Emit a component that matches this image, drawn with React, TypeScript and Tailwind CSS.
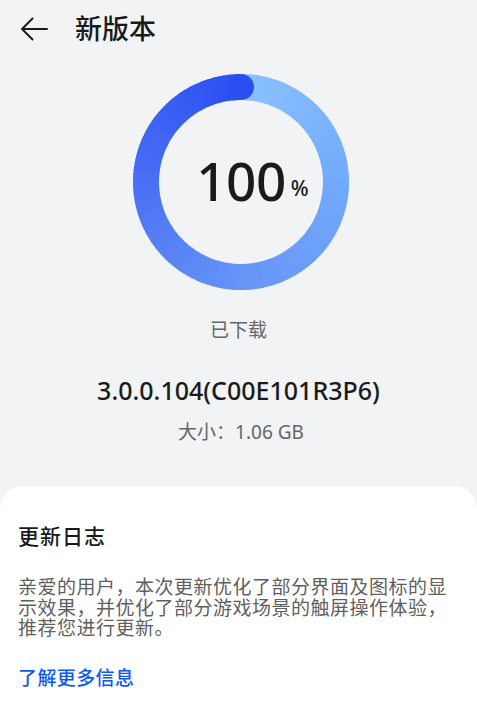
import React from "react";

const FONT = '"Noto Sans", "Noto Sans CJK SC", sans-serif';

type RGB = [number, number, number];
const stops: [number, RGB][] = [
  [0, [0x8a, 0xc2, 0xfe]],
  [90, [0x73, 0xaa, 0xfb]],
  [180, [0x67, 0x95, 0xf7]],
  [270, [0x4a, 0x70, 0xf4]],
  [360, [0x2a, 0x4f, 0xf1]],
];

function colorAt(a: number): string {
  for (let i = 0; i < stops.length - 1; i++) {
    const [a0, c0] = stops[i];
    const [a1, c1] = stops[i + 1];
    if (a >= a0 && a <= a1) {
      const t = (a - a0) / (a1 - a0);
      const c = c0.map((v, k) => Math.round(v + (c1[k] - v) * t));
      return `rgb(${c[0]},${c[1]},${c[2]})`;
    }
  }
  return "rgb(42,79,241)";
}

function Ring() {
  const cx = 108;
  const cy = 108;
  const r = 95;
  const N = 180;
  const segs = [];
  for (let i = 0; i < N; i++) {
    const a0 = (i * 360) / N;
    const a1 = Math.min(360, ((i + 1) * 360) / N + 0.6);
    const p = (deg: number) => {
      const rad = (deg * Math.PI) / 180;
      return [cx + r * Math.sin(rad), cy - r * Math.cos(rad)];
    };
    const [x0, y0] = p(a0);
    const [x1, y1] = p(a1);
    segs.push(
      <path
        key={i}
        d={`M ${x0} ${y0} A ${r} ${r} 0 0 1 ${x1} ${y1}`}
        stroke={colorAt((a0 + a1) / 2)}
        strokeWidth={26}
        fill="none"
      />
    );
  }
  return (
    <svg width="216" height="216" viewBox="0 0 216 216">
      {segs}
      <circle cx={cx} cy={cy - r} r={13} fill="rgb(42,79,241)" />
    </svg>
  );
}

export default function App() {
  return (
    <div
      className="w-[477px] h-[714px] bg-[#f1f3f5] flex flex-col overflow-hidden"
      style={{ fontFamily: FONT }}
    >
      <div className="h-[58px] flex items-center pl-[20px] shrink-0">
        <svg width="28" height="24" viewBox="0 0 28 24" fill="none">
          <path
            d="M27 12 H2 M12.5 1.5 L2 12 L12.5 22.5"
            stroke="#1a1a1a"
            strokeWidth="2"
            strokeLinecap="round"
            strokeLinejoin="round"
          />
        </svg>
        <div className="ml-[27px] text-[27px] leading-[34px] font-medium text-[#191919]">新版本</div>
      </div>

      <div className="mt-[16px] self-center ml-[5px] relative w-[216px] h-[216px] shrink-0">
        <Ring />
        <div className="absolute inset-0 flex items-center justify-center">
          <div className="relative leading-none text-[#1a1a1a] -mt-[4px]">
            <span className="text-[53px] font-medium tracking-[-0.5px]">100</span>
            <span className="absolute left-full bottom-[8px] ml-[5px] text-[21px] font-medium">%</span>
          </div>
        </div>
      </div>

      <div className="mt-[28px] text-center text-[19px] leading-[24px] text-[#666666]">已下载</div>
      <div className="mt-[33px] text-center text-[25px] leading-[30px] font-medium text-[#1b1b1b]">
        3.0.0.104(C00E101R3P6)
      </div>
      <div className="mt-[15px] text-center text-[19px] leading-[24px] text-[#666666] pl-[5px]">大小：1.06 GB</div>

      <div className="mt-[42px] flex-1 bg-white rounded-t-[24px] px-[18px]">
        <div className="pt-[35px] text-[21px] leading-[30px] font-medium tracking-[1px] text-[#1a1a1a]">更新日志</div>
        <p className="mt-[26px] text-[19px] leading-[20.5px] tracking-[0.5px] text-[#5f5f5f]">
          亲爱的用户，本次更新优化了部分界面及图标的显示效果，并优化了部分游戏场景的触屏操作体验，推荐您进行更新。
        </p>
        <div className="mt-[26px] text-[19px] leading-[26px] font-medium tracking-[0.4px] text-[#0a59f7]">了解更多信息</div>
      </div>
    </div>
  );
}
